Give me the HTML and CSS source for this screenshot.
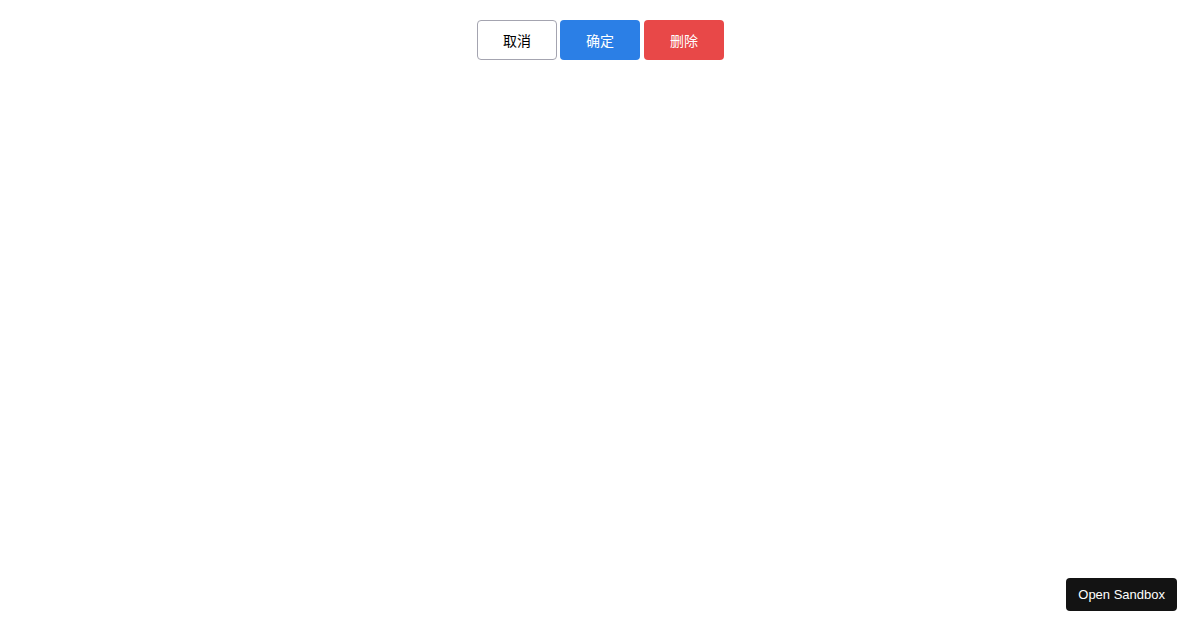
FILE: index.html
```html
<!DOCTYPE html>
<html lang="zh">
<head>
  <meta charset="UTF-8" />
  <meta name="viewport" content="width=device-width, initial-scale=1.0"/>
  <title>Buttons</title>
  <link rel="stylesheet" href="styles.css">
</head>
<body>
  <!-- Actions -->
  <div class="actions">
    <button class="btn cancel">取消</button>
    <button class="btn confirm">确定</button>
    <button class="btn delete">删除</button>
  </div>

  <a class="sandbox" href="#">Open Sandbox</a>
</body>
</html>
```

FILE: styles.css
```css
body {
  margin: 0;
  font-family: "Liberation Sans", Arial, "Noto Sans CJK SC", sans-serif;
  background: #fff;
  min-height: 100vh;
}

.actions {
  display: flex;
  justify-content: center;
  gap: 3px;
  padding: 20px 0 0 1px;
}

.btn {
  width: 80px;
  height: 40px;
  font-size: 14px;
  font-family: inherit;
  border: 1px solid transparent;
  border-radius: 4px;
  cursor: pointer;
}

.btn.cancel { background: #fff; color: #000; border-color: #a4a4b0; }
.btn.confirm { background: #2b7fe6; color: #fff; }
.btn.delete { background: #e84848; color: #fff; margin-left: 1px; }

.sandbox {
  position: fixed;
  right: 23px;
  bottom: 19px;
  padding: 9px 12px;
  line-height: 15px;
  background: #131313;
  color: #fff;
  font-size: 13px;
  text-decoration: none;
  border-radius: 4px;
}
```
